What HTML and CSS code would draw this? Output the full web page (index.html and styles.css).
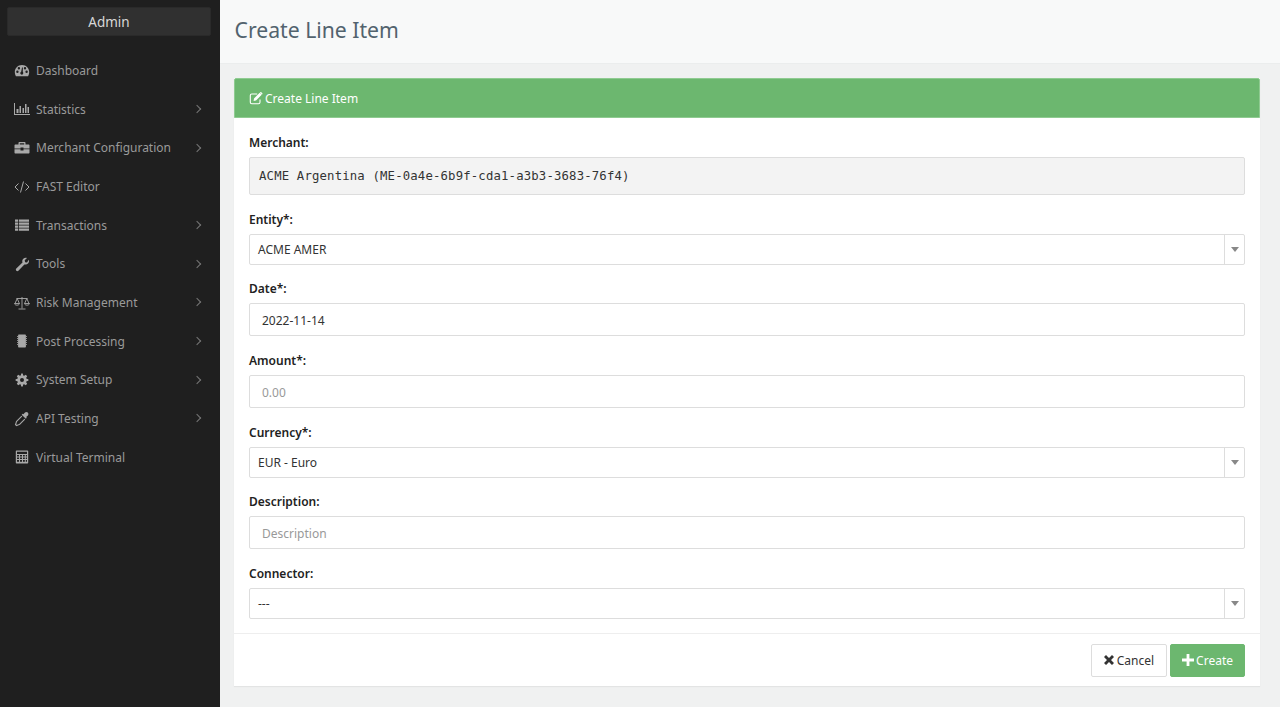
FILE: index.html
```html
<!DOCTYPE html>
<html lang="en">
<head>
  <meta charset="UTF-8" />
  <title>Create Line Item</title>
  <link rel="stylesheet" href="styles.css">
</head>
<body>
  <aside class="sidebar">
    <div class="admin-btn">Admin</div>
    <nav class="nav">
      <a class="nav-item"><svg class="nav-icon" viewBox="0 0 16 16"><path fill="currentColor" fill-rule="evenodd" d="M8 2C3.600 2 .8 5.300.8 9.200c0 1.500.4 2.800 1.100 4h12.200c.7-1.200 1.100-2.500 1.100-4C15.200 5.300 12.400 2 8 2zM3.400 9.900a1.200 1.200 0 1 1 0-2.400 1.200 1.200 0 0 1 0 2.400zm1.500-3.500a1.200 1.200 0 1 1 0-2.400 1.200 1.200 0 0 1 0 2.400zM9 11a1.500 1.500 0 0 1-2.700-1c0-.6.400-1.100.9-1.300l.8-4.200.9.100-.1 4.200c.5.400.6 1.600.2 2.200zm2-4.600a1.200 1.200 0 1 1 0-2.400 1.200 1.200 0 0 1 0 2.400zm1.600 3.500a1.200 1.200 0 1 1 0-2.400 1.200 1.200 0 0 1 0 2.400z"/></svg><span>Dashboard</span></a>
      <a class="nav-item has-sub"><svg class="nav-icon" viewBox="0 0 16 16"><path fill="currentColor" d="M0 2h1v11h15v1H0zM2.500 8h2v4h-2zM5.500 5h1.500v7H5.500zM8.500 7H10v5H8.500zM11 3h1.500v9H11zM13.500 6H15v6h-1.500z"/></svg><span>Statistics</span></a>
      <a class="nav-item has-sub"><svg class="nav-icon" viewBox="0 0 16 16"><path fill="currentColor" d="M5.500 2h5c.6 0 1 .4 1 1v1.500h3c.6 0 1 .4 1 1v3H9.500V7.500h-3v1H.5v-3c0-.6.4-1 1-1h3V3c0-.6.400-1 1-1zm.3 1.200v1.300h4.400V3.200zM.5 9.200h6v1.300h3V9.200h6v3.300c0 .6-.4 1-1 1h-13c-.6 0-1-.4-1-1z"/></svg><span>Merchant Configuration</span></a>
      <a class="nav-item"><svg class="nav-icon" viewBox="0 0 16 16"><path fill="none" stroke="currentColor" stroke-width="1" d="M4.500 4.500 1 8l3.500 3.500M11.500 4.500 15 8l-3.500 3.500M9.500 2.500l-3 11"/></svg><span>FAST Editor</span></a>
      <a class="nav-item has-sub"><svg class="nav-icon" viewBox="0 0 16 16"><path fill="currentColor" d="M1 2.500h3v2.200H1zM4.800 2.500H15v2.200H4.800zM1 5.500h3v2.200H1zM4.800 5.500H15v2.200H4.800zM1 8.500h3v2.200H1zM4.800 8.500H15v2.200H4.800zM1 11.500h3v2.200H1zM4.800 11.500H15v2.200H4.800z"/></svg><span>Transactions</span></a>
      <a class="nav-item has-sub"><svg class="nav-icon" viewBox="0 0 16 16"><path fill="currentColor" d="M14.800 3.800c.5 1.300.2 2.800-.8 3.800-1 1-2.400 1.200-3.600.8l-6 6.300c-.6.600-1.500.6-2.100 0-.6-.6-.6-1.500 0-2.100l6.200-6.100C8 5.200 8.300 3.800 9.300 2.800c1-1 2.400-1.300 3.700-.8l-2.300 2.300.4 1.900 1.900.4z"/></svg><span>Tools</span></a>
      <a class="nav-item has-sub"><svg class="nav-icon" viewBox="0 0 16 16"><path fill="none" stroke="currentColor" stroke-width=".9" d="M8 2v11.500M4.500 14h7M2.500 3.500h11M3.200 3.500 1 8.500M3.200 3.500l2.200 5M12.800 3.500l-2.200 5M12.800 3.500l2.200 5M.5 8.500c.3 2.200 4.700 2.200 5 0zM10.500 8.500c.3 2.200 4.700 2.200 5 0z"/></svg><span>Risk Management</span></a>
      <a class="nav-item has-sub"><svg class="nav-icon" viewBox="0 0 16 16"><path fill="currentColor" d="M4.800 1.500h6.400c.4 0 .7.300.7.700v11.600c0 .4-.3.700-.7.700H4.800c-.4 0-.7-.3-.7-.7V2.200c0-.4.300-.7.700-.7zM3 3h.8v1H3zM3 5h.8v1H3zM3 7h.8v1H3zM3 9h.8v1H3zM3 11h.8v1H3zM12.200 3h.8v1h-.8zM12.200 5h.8v1h-.8zM12.200 7h.8v1h-.8zM12.200 9h.8v1h-.8zM12.200 11h.8v1h-.8z"/></svg><span>Post Processing</span></a>
      <a class="nav-item has-sub"><svg class="nav-icon" viewBox="-2 -2 20 20"><path fill="currentColor" fill-rule="evenodd" d="M7 0h2l.5 2.300 1.200.5 2-1.300 1.800 1.800-1.300 2 .5 1.200L16 7v2l-2.300.5-.5 1.200 1.300 2-1.800 1.800-2-1.300-1.200.5L9 16H7l-.5-2.300-1.200-.5-2 1.300-1.800-1.800 1.300-2-.5-1.200L0 9V7l2.300-.5.5-1.200-1.300-2 1.800-1.800 2 1.300 1.200-.5zM8 5.500a2.500 2.500 0 1 0 0 5 2.500 2.500 0 0 0 0-5z"/></svg><span>System Setup</span></a>
      <a class="nav-item has-sub"><svg class="nav-icon" viewBox="0 0 16 16"><path fill="currentColor" d="M11 1.500c.7-.7 2-.7 2.800.1.800.8.800 2 .1 2.800l-1.700 1.700.6.700-1 1-4.100-4.100 1-1 .7.600z"/><path fill="none" stroke="currentColor" stroke-width="1.100" d="M7.800 5.200 2.600 10.400c-.4.400-.3 1.100-.5 1.600L1.500 13.500l1 1 1.500-.6c.5-.2 1.200-.1 1.600-.5l5.200-5.200"/></svg><span>API Testing</span></a>
      <a class="nav-item"><svg class="nav-icon" viewBox="0 0 16 16"><path fill="currentColor" fill-rule="evenodd" d="M2.500 1.500h11c.4 0 .7.300.7.700v11.600c0 .4-.3.700-.7.700h-11c-.4 0-.7-.3-.7-.7V2.200c0-.4.300-.7.700-.7zM3 2.700v2.300h10V2.700zM3 6v1.600h2V6zm3 0v1.600h2V6zm3 0v1.600h1.800V6zm2.800 0v1.600H13V6zM3 8.500v1.600h2V8.500zm3 0v1.600h2V8.500zm3 0v1.600h1.800V8.500zm2.800 0v1.600H13V8.500zM3 11v1.700h2V11zm3 0v1.700h2V11zm3 0v1.700h1.800V11zm2.800 0v1.700H13V11z"/></svg><span>Virtual Terminal</span></a>
    </nav>
  </aside>

  <main class="main">
    <header class="page-head"><h1>Create Line Item</h1></header>
    <div class="content">
      <section class="panel">
        <div class="panel-title">
          <svg class="title-icon" viewBox="0 0 14 14"><path fill="none" stroke="currentColor" stroke-width="1.100" d="M11 8.500v2.700c0 1-.6 1.500-1.500 1.500H2.800c-1 0-1.500-.5-1.500-1.500V4.500c0-1 .5-1.500 1.500-1.500h5.400"/><path fill="currentColor" d="M5 7.500 10.700 1.800l2 2L7 9.500l-2.400.4zM11.300 1.200c.3-.3.700-.3 1 0l1 1c.3.3.3.700 0 1l-.4.400-2-2z"/></svg>
          Create Line Item
        </div>
        <form class="panel-body">
          <div class="field">
            <label>Merchant:</label>
            <div class="static-value">ACME Argentina (ME-0a4e-6b9f-cda1-a3b3-3683-76f4)</div>
          </div>
          <div class="field">
            <label>Entity*:</label>
            <div class="select"><span class="select-value">ACME AMER</span><span class="select-arrow"></span></div>
          </div>
          <div class="field">
            <label>Date*:</label>
            <div class="input">2022-11-14</div>
          </div>
          <div class="field">
            <label>Amount*:</label>
            <div class="input placeholder">0.00</div>
          </div>
          <div class="field">
            <label>Currency*:</label>
            <div class="select"><span class="select-value">EUR - Euro</span><span class="select-arrow"></span></div>
          </div>
          <div class="field">
            <label>Description:</label>
            <div class="input placeholder">Description</div>
          </div>
          <div class="field">
            <label>Connector:</label>
            <div class="select"><span class="select-value">---</span><span class="select-arrow"></span></div>
          </div>
        </form>
        <div class="panel-foot">
          <button class="btn btn-default" type="button"><svg class="btn-icon" viewBox="0 0 12 12"><path fill="currentColor" d="M3 1l3 3 3-3 2 2-3 3 3 3-2 2-3-3-3 3-2-2 3-3-3-3z"/></svg>Cancel</button>
          <button class="btn btn-success" type="button"><svg class="btn-icon" viewBox="0 0 12 12"><path fill="currentColor" d="M4.600 0h2.800v4.600H12v2.800H7.400V12H4.600V7.400H0V4.600h4.600z"/></svg>Create</button>
        </div>
      </section>
    </div>
  </main>
</body>
</html>
```

FILE: styles.css
```css
* {
  box-sizing: border-box;
}
html, body {
  height: 100%;
}
body {
  margin: 0;
  display: flex;
  overflow: hidden;
  background-color: #f0f1f1;
  color: #333;
  font-family: "Noto Sans", "Open Sans", sans-serif;
  font-size: 12px;
}
.sidebar {
  width: 220px;
  flex-shrink: 0;
  background-color: #1f1f1f;
  padding: 7px 9px 0 7px;
}
.admin-btn {
  height: 29px;
  line-height: 28px;
  text-align: center;
  font-size: 13.5px;
  color: #d8d8d8;
  background-color: #303030;
  border: 1px solid #2a2a2a;
  border-radius: 2px;
}
.nav {
  margin-top: 15.3px;
}
.nav-item {
  display: flex;
  align-items: center;
  height: 38.67px;
  padding-left: 7px;
  color: #9a9a9a;
  position: relative;
}
.nav-icon {
  width: 16px;
  height: 16px;
  margin-right: 6px;
  flex-shrink: 0;
  color: #a8a8a8;
}
.has-sub::after {
  content: "";
  position: absolute;
  right: 11px;
  top: 16px;
  width: 5px;
  height: 5px;
  border-top: 1px solid #777;
  border-right: 1px solid #777;
  transform: rotate(45deg);
}
.main {
  flex: 1;
  min-width: 0;
}
.page-head {
  height: 64px;
  padding: 0 0 4px 14.5px;
  background-color: #f8f9f9;
  border-bottom: 1px solid #ebeded;
  display: flex;
  align-items: center;
}
.page-head h1 {
  margin: 0;
  font-size: 21.2px;
  font-weight: 400;
  color: #52636e;
}
.content {
  padding: 14px 20px 0 14px;
}
.panel {
  background-color: #fff;
  box-shadow: 0 1px 1px rgba(0, 0, 0, 0.05);
}
.panel-title {
  display: flex;
  align-items: center;
  height: 40px;
  padding-left: 14px;
  background-color: #6cb76f;
  border: 1px solid #8fcb91;
  border-radius: 2px 2px 0 0;
  color: #fff;
}
.title-icon {
  width: 14px;
  height: 14px;
  margin-right: 2px;
}
.panel-body {
  padding: 16px 15px 14px;
}
.field {
  margin-bottom: 15.5px;
}
.field:last-child {
  margin-bottom: 0;
}
label {
  display: block;
  margin-bottom: 5px;
  height: 18px;
  line-height: 18px;
  font-weight: 600;
  color: #222;
}
.static-value {
  height: 38px;
  line-height: 36px;
  padding-left: 9px;
  background-color: #f3f3f3;
  border: 1px solid #ddd;
  border-radius: 2px;
  font-family: "DejaVu Sans Mono", monospace;
  font-size: 12.3px;
  letter-spacing: 0.16px;
  color: #333;
}
.select {
  display: flex;
  height: 31px;
  border: 1px solid #ddd;
  border-radius: 2px;
}
.select-value {
  flex: 1;
  line-height: 29px;
  padding-left: 8px;
}
.select-arrow {
  width: 20px;
  border-left: 1px solid #ddd;
  position: relative;
}
.select-arrow::after {
  content: "";
  position: absolute;
  left: 5.5px;
  top: 12px;
  border-left: 4px solid transparent;
  border-right: 4px solid transparent;
  border-top: 5px solid #888;
}
.input {
  height: 33.25px;
  line-height: 33px;
  padding-left: 12px;
  border: 1px solid #ddd;
  border-radius: 2px;
}
.placeholder {
  color: #999;
}
.panel-foot {
  display: flex;
  justify-content: flex-end;
  gap: 3px;
  padding: 10px 15px 9px;
  border-top: 1px solid #eee;
}
.btn {
  display: flex;
  align-items: center;
  height: 33px;
  padding: 0 11px;
  border-radius: 2px;
  border: 1px solid #ddd;
  font-family: inherit;
  font-size: 12px;
}
.btn-default {
  padding-right: 12px;
  background-color: #fff;
  color: #333;
}
.btn-success {
  background-color: #6cb76f;
  border-color: #6cb76f;
  color: #fff;
}
.btn-icon {
  width: 12px;
  height: 12px;
  margin-right: 2px;
}
```
